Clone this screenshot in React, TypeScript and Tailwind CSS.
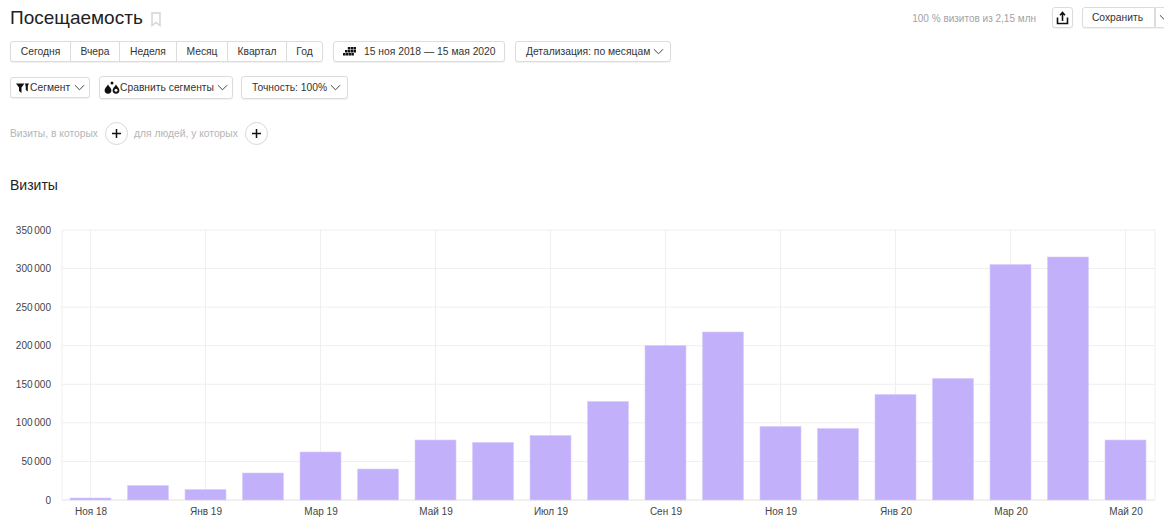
import React from "react";

const F = { fontFamily: '"Liberation Sans", Arial, sans-serif' };

function Chevron() {
  return (
    <svg width="11" height="7" viewBox="0 0 12 7" className="shrink-0" fill="none" stroke="#333" strokeWidth="1">
      <path d="M1 1l5 5 5-5" />
    </svg>
  );
}

function GridIcon() {
  return (
    <svg width="13" height="9" viewBox="0 0 13 9" fill="#111" className="shrink-0">
      <rect x="4.800" y="0" width="2.500" height="2.500" /><rect x="7.700" y="0" width="2.500" height="2.500" /><rect x="10.500" y="0" width="2.500" height="2.500" />
      <rect x="2" y="3" width="2.500" height="2.500" /><rect x="4.800" y="3" width="2.500" height="2.500" /><rect x="7.700" y="3" width="2.500" height="2.500" /><rect x="10.500" y="3" width="2.500" height="2.500" />
      <rect x="0" y="6" width="2.500" height="2.500" /><rect x="2.800" y="6" width="2.500" height="2.500" /><rect x="5.600" y="6" width="2.500" height="2.500" /><rect x="8.400" y="6" width="2.500" height="2.500" />
    </svg>
  );
}

function Btn({ className, children }: { className: string; children: React.ReactNode }) {
  return (
    <div className={"flex items-center rounded-[3px] border border-[#dcdcdc] bg-white text-[10.3px] text-[#333] shadow-[0_1px_1px_rgba(0,0,0,0.06)] whitespace-nowrap " + className}>
      {children}
    </div>
  );
}

function Plus() {
  return (
    <div className="flex h-[23px] w-[23px] items-center justify-center rounded-full border border-[#d8d8d8] bg-white">
      <svg width="11" height="11" viewBox="0 0 11 11" stroke="#111" strokeWidth="1.5"><path d="M5.5 1v9M1 5.5h9" /></svg>
    </div>
  );
}

const tops = [498, 485.5, 489.5, 473, 452, 469, 440, 442.5, 435.5, 401.5, 345.5, 332, 426.5, 428.5, 394.5, 378.5, 264.5, 257, 440];
const yLabels = ["350 000", "300 000", "250 000", "200 000", "150 000", "100 000", "50 000", "0"];
const xLabels: [number, string][] = [[0, "Ноя 18"], [2, "Янв 19"], [4, "Мар 19"], [6, "Май 19"], [8, "Июл 19"], [10, "Сен 19"], [12, "Ноя 19"], [14, "Янв 20"], [16, "Мар 20"], [18, "Май 20"]];

function Chart() {
  return (
    <svg width="1164" height="319" viewBox="0 210 1164 319" className="block">
      {yLabels.map((l, i) => {
        const y = 230 + (i * 270) / 7;
        return (
          <g key={l}>
            <line x1="62" x2="1155" y1={y} y2={y} stroke={i === 7 ? "#e2e2e2" : "#efefef"} strokeWidth="1" />
            <text x="51" y={y + 3.5} textAnchor="end" fontSize="10" fill="#444" style={F} wordSpacing="-1">{l}</text>
          </g>
        );
      })}
      <line x1="62" x2="62" y1="230" y2="500" stroke="#efefef" />
      <line x1="1155" x2="1155" y1="230" y2="500" stroke="#efefef" />
      {xLabels.map(([i, l]) => {
        const x = 90.5 + i * 57.5;
        return (
          <g key={l}>
            <line x1={x} x2={x} y1="230" y2="500" stroke="#efefef" />
            <text x={x + 0.5} y="515" textAnchor="middle" fontSize="10" fill="#444" style={F}>{l}</text>
          </g>
        );
      })}
      {tops.map((t, i) => (
        <rect key={i} x={70 + i * 57.5} y={t} width="41" height={500 - t} fill="#c2b0fa" stroke="#d9cdfc" strokeWidth="0.6" />
      ))}
    </svg>
  );
}

export default function App() {
  return (
    <div className="relative flex h-[529px] w-[1164px] flex-col overflow-hidden bg-white" style={F}>
      <div className="-mr-[8px] flex h-[41px] items-start pl-[10px]">
        <div className="mt-[5px] text-[19px] leading-[26px] text-[#222]">Посещаемость</div>
        <svg width="10" height="15" viewBox="0 0 10 15" className="ml-[8px] mt-[12px]" fill="none" stroke="#d5d5d5" strokeWidth="1.5">
          <path d="M1 1h8v12.500L5 10.500 1 13.500z" />
        </svg>
        <div className="ml-auto mt-[12px] text-[10px] leading-[13px] text-[#a3a3a3]">100 % визитов из 2,15 млн</div>
        <Btn className="ml-[16px] mt-[7px] h-[21px] w-[21px] justify-center">
          <svg width="13" height="14" viewBox="0 0 13 14" fill="none" stroke="#111" strokeWidth="1.6">
            <path d="M1.500 6.500v6h10v-6" />
            <path d="M6.500 10V2M4 4.200l2.500-2.700L9 4.200" />
          </svg>
        </Btn>
        <div className="ml-[9px] mt-[7px] flex h-[21px] w-[90px] shrink-0">
          <Btn className="h-[21px] w-[73px] justify-center rounded-r-none pr-[2px]">Сохранить</Btn>
          <Btn className="h-[21px] flex-1 justify-center rounded-l-none pl-[2px]"><Chevron /></Btn>
        </div>
      </div>

      <div className="flex items-stretch pl-[10px]">
        <Btn className="h-[21px] w-[313px]">
          {[["Сегодня", "w-[59px]"], ["Вчера", "w-[49px]"], ["Неделя", "w-[57px]"], ["Месяц", "w-[51px]"], ["Квартал", "w-[59px]"], ["Год", "flex-1"]].map(([t, w], i) => (
            <div key={t} className={"flex h-full items-center justify-center " + w + (i ? " border-l border-[#dcdcdc]" : "")}>{t}</div>
          ))}
        </Btn>
        <Btn className="ml-[10px] h-[21px] w-[172px] pl-[9px]"><GridIcon /><span className="ml-[8px]">15 ноя 2018 — 15 мая 2020</span></Btn>
        <Btn className="ml-[10px] h-[21px] w-[156px] pl-[10px]"><span>Детализация: по месяцам</span><span className="ml-[3px]"><Chevron /></span></Btn>
      </div>

      <div className="mt-[14px] flex items-center pl-[10px]">
        <Btn className="h-[21px] w-[80px] pl-[5px]">
          <svg width="13" height="10" viewBox="0 0 13 10" fill="#111" className="shrink-0"><path d="M0 0.500h8.500L5.500 4.500V10L3 8V4.500zM9 0.500h4L11.800 3v5.500L9.800 7V4z" /></svg>
          <span className="ml-[1px] mr-[4px]">Сегмент</span><Chevron />
        </Btn>
        <Btn className="ml-[9px] h-[23px] w-[134px] pl-[4px]">
          <svg width="16" height="13" viewBox="0 0 16 13" fill="#111" className="shrink-0">
            <path d="M4 3.500C5.500 6 7.400 7.300 7.400 9.300a3.400 3.400 0 0 1-6.800 0C.6 7.300 2.500 6 4 3.500z" />
            <path d="M12 3.500c1.500 2.500 3.400 3.800 3.400 5.800a3.400 3.400 0 0 1-6.800 0c0-2 1.900-3.300 3.400-5.800z" />
            <circle cx="8" cy="2" r="1.500" />
            <circle cx="12" cy="9.300" r="1.500" fill="#fff" />
          </svg>
          <span className="ml-[0px] mr-[3px]">Сравнить сегменты</span><Chevron />
        </Btn>
        <Btn className="ml-[8px] h-[23px] w-[107px] pl-[10px]"><span className="mr-[3px]">Точность: 100%</span><Chevron /></Btn>
      </div>

      <div className="mt-[23px] flex items-center pl-[10px] text-[10.3px] text-[#b5b5b5]">
        <span>Визиты, в которых</span>
        <div className="ml-[7px]"><Plus /></div>
        <span className="ml-[6px]">для людей, у которых</span>
        <div className="ml-[7px]"><Plus /></div>
      </div>

      <div className="mt-[31px] pl-[10px] text-[14px] leading-[18px] text-[#222]">Визиты</div>
      <div className="mt-[16px]"><Chart /></div>
    </div>
  );
}
